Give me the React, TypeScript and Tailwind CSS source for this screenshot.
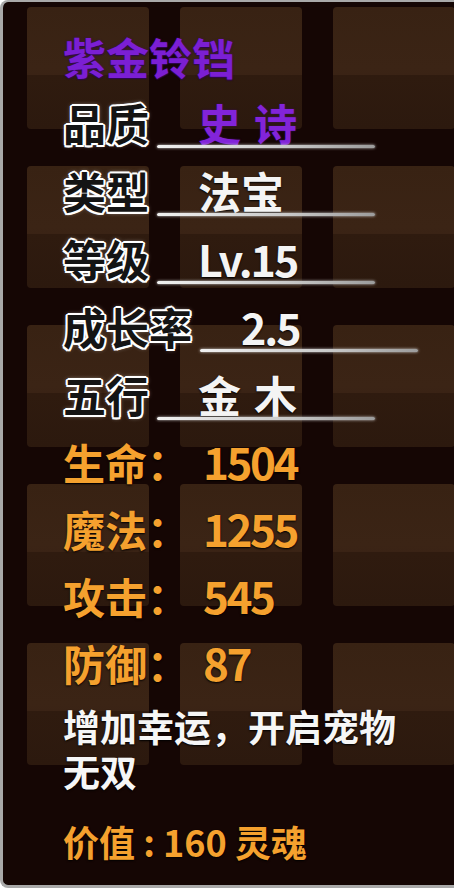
// App.tsx — item tooltip card (紫金铃铛)

const FONT = "font-['Noto_Sans_CJK_SC','Noto_Sans',sans-serif]";

const OUTLINE =
  "[text-shadow:0_0_1px_#fff,2px_0_0_#fff,-2px_0_0_#fff,0_2px_0_#fff,0_-2px_0_#fff,1.5px_1.5px_0_#fff,-1.5px_-1.5px_0_#fff,1.5px_-1.5px_0_#fff,-1.5px_1.5px_0_#fff,0_0_5px_#cfcfcf]";

interface Attr {
  label: string;
  value: string[];
  purple?: boolean;
  tight?: boolean;
}

const attrs: Attr[] = [
  { label: "品质", value: ["史", "诗"], purple: true },
  { label: "类型", value: ["法宝"] },
  { label: "等级", value: ["Lv.15"], tight: true },
  { label: "成长率", value: ["2.5"], tight: true },
  { label: "五行", value: ["金", "木"] },
];

const stats = [
  { label: "生命", value: "1504" },
  { label: "魔法", value: "1255" },
  { label: "攻击", value: "545" },
  { label: "防御", value: "87" },
];

function Cell() {
  return (
    <div className="h-[122px] rounded-[4px] bg-[linear-gradient(to_bottom,#382213_0%,#3b2415_50%,#3a2315_56%,#2f1b0f_56%,#2c190e_100%)]" />
  );
}

export default function App() {
  return (
    <div
      className={`relative w-[454px] h-[888px] overflow-hidden bg-[#150604] border-l-[3px] border-t-[2px] border-b-[3px] border-[#a9a9a9] rounded-l-[8px] ${FONT}`}
    >
      {/* backdrop slots */}
      <div className="absolute left-[24px] top-[5px] grid grid-cols-[122px_122px_122px] gap-x-[31px] gap-y-[37px]">
        {Array.from({ length: 15 }).map((_, i) => (
          <Cell key={i} />
        ))}
      </div>

      <div className="relative pl-[60px] pt-[32px]">
        {/* title */}
        <div className="h-[66px] text-[43px] leading-[44px] font-bold text-[#7b1fd3] [text-shadow:0_0_2px_#3b0b66,0_1px_1px_#2a0648]">
          紫金铃铛
        </div>

        {/* attribute rows */}
        {attrs.map((a) => (
          <div key={a.label} className="h-[68px] flex items-start">
            <span className={`text-[43px] leading-[44px] font-bold text-[#141414] ${OUTLINE}`}>
              {a.label}
            </span>
            <div className="ml-[8px] w-[218px] flex flex-col">
              <div
                className={`h-[44px] pl-[41px] flex gap-[13px] text-[43px] leading-[44px] font-bold ${
                  a.purple
                    ? "text-[#8224d9] [text-shadow:0_0_2px_#3b0b66]"
                    : "text-[#f4f4f4] [text-shadow:0_1px_2px_#000]"
                } ${a.tight ? "tracking-[-2px]" : ""}`}
              >
                {a.value.map((v) => (
                  <span key={v}>{v}</span>
                ))}
              </div>
              <div className="mt-[1px] h-[3px] rounded-full bg-[linear-gradient(to_right,#f0f0f0,#c8c8c8_60%,#9c9c9c)] shadow-[0_0_3px_#d0d0d0]" />
            </div>
          </div>
        ))}

        {/* stats */}
        {stats.map((s) => (
          <div
            key={s.label}
            className="h-[67px] flex items-baseline text-[#f5a12e] font-bold [text-shadow:0_1px_2px_#000]"
          >
            <span className="text-[42px] leading-[43px]">{s.label}：</span>
            <span className="ml-[14px] text-[44px] leading-[43px] tracking-[-2.5px]">{s.value}</span>
          </div>
        ))}

        {/* description */}
        <div className="-mt-[4px] w-[350px] text-[37px] leading-[45px] font-bold text-[#f6f6f6] [text-shadow:0_1px_2px_#000]">
          增加幸运，开启宠物无双
        </div>

        {/* value */}
        <div className="mt-[27px] text-[36px] leading-[40px] font-bold text-[#f5a12e] [text-shadow:0_1px_2px_#000]">
          价值 : 160 灵魂
        </div>
      </div>
    </div>
  );
}
